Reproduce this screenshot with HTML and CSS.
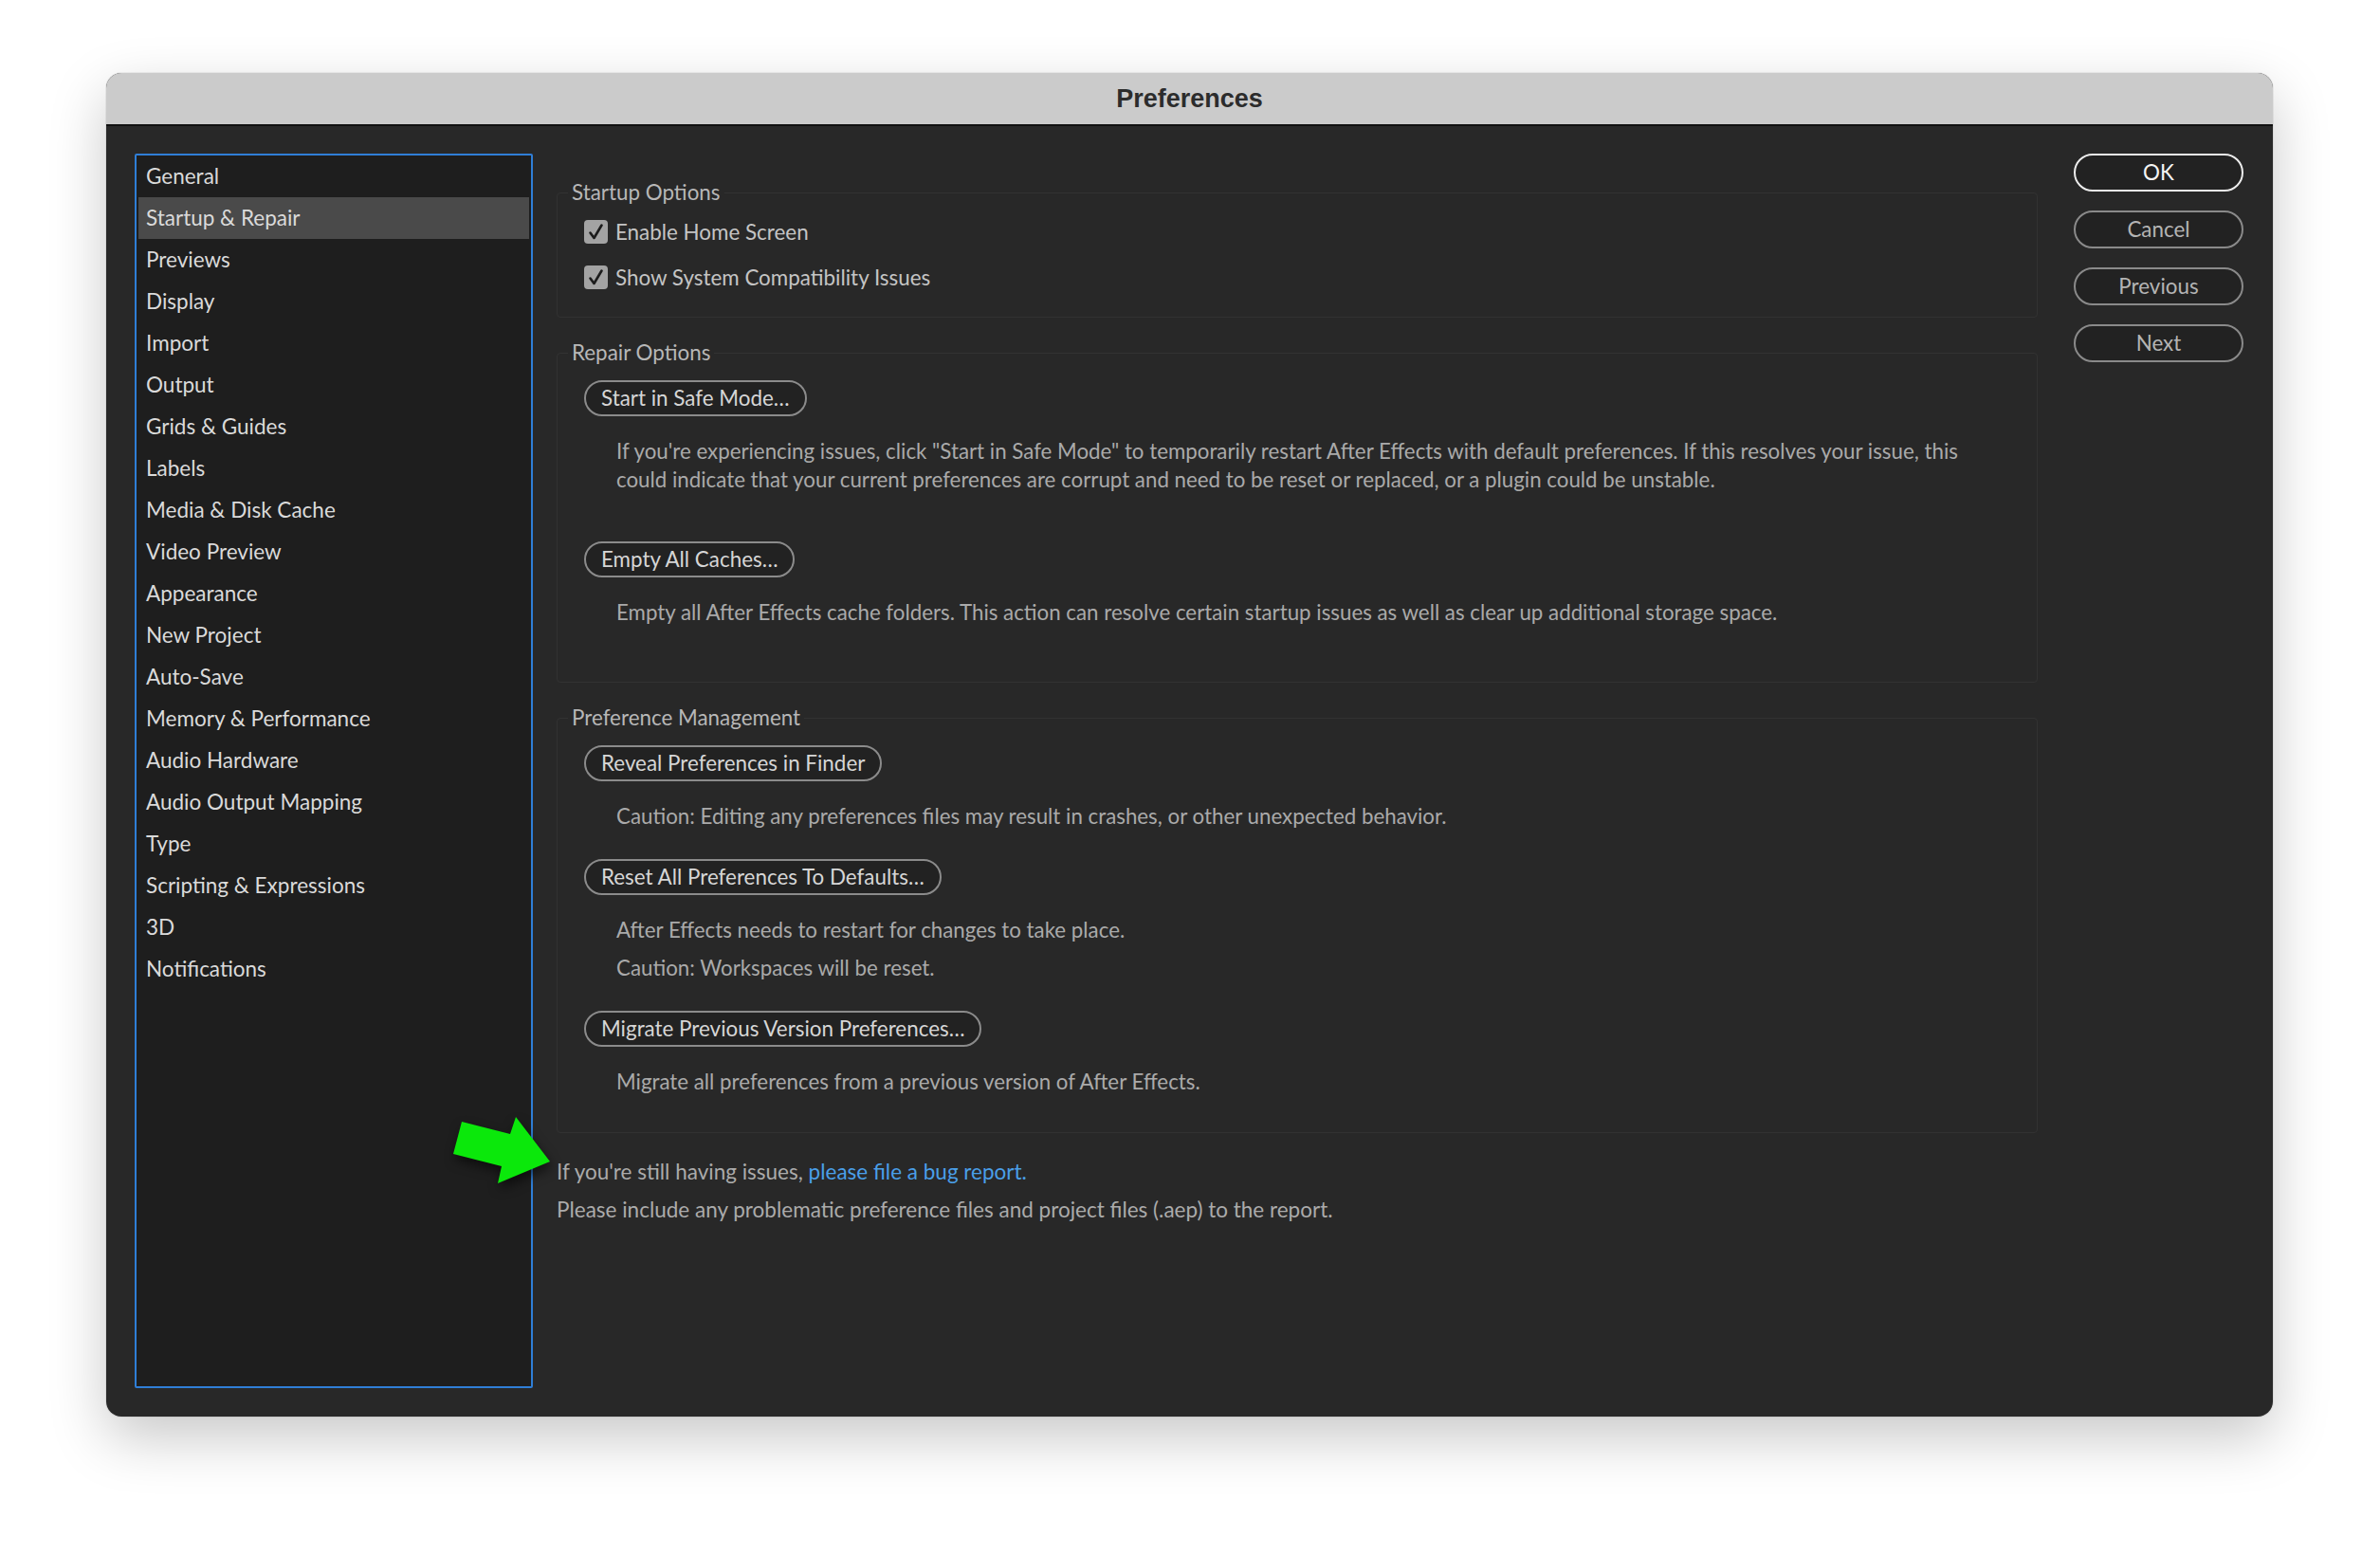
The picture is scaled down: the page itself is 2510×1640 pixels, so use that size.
FILE: index.html
```html
<!DOCTYPE html>
<html lang="en">
<head>
<meta charset="utf-8">
<title>Preferences</title>
<link rel="stylesheet" href="styles.css">
</head>
<body>
<div class="stage">
  <div class="window">
    <div class="titlebar">Preferences</div>
    <div class="window-body">
      <nav class="sidebar">
        <ul class="nav-list">
          <li class="nav-item">General</li>
          <li class="nav-item selected">Startup &amp; Repair</li>
          <li class="nav-item">Previews</li>
          <li class="nav-item">Display</li>
          <li class="nav-item">Import</li>
          <li class="nav-item">Output</li>
          <li class="nav-item">Grids &amp; Guides</li>
          <li class="nav-item">Labels</li>
          <li class="nav-item">Media &amp; Disk Cache</li>
          <li class="nav-item">Video Preview</li>
          <li class="nav-item">Appearance</li>
          <li class="nav-item">New Project</li>
          <li class="nav-item">Auto-Save</li>
          <li class="nav-item">Memory &amp; Performance</li>
          <li class="nav-item">Audio Hardware</li>
          <li class="nav-item">Audio Output Mapping</li>
          <li class="nav-item">Type</li>
          <li class="nav-item">Scripting &amp; Expressions</li>
          <li class="nav-item">3D</li>
          <li class="nav-item">Notifications</li>
        </ul>
      </nav>

      <main class="content">
        <fieldset class="group group-startup">
          <legend class="group-label">Startup Options</legend>
          <label class="check-row">
            <span class="checkbox"><svg viewBox="0 0 25 25" width="25" height="25"><path d="M6.5 13.5 L10.5 19 L18.5 5.5" fill="none" stroke="#1c1c1c" stroke-width="2.6" stroke-linecap="round" stroke-linejoin="round"/></svg></span>
            <span class="check-text">Enable Home Screen</span>
          </label>
          <label class="check-row">
            <span class="checkbox"><svg viewBox="0 0 25 25" width="25" height="25"><path d="M6.5 13.5 L10.5 19 L18.5 5.5" fill="none" stroke="#1c1c1c" stroke-width="2.6" stroke-linecap="round" stroke-linejoin="round"/></svg></span>
            <span class="check-text">Show System Compatibility Issues</span>
          </label>
        </fieldset>

        <fieldset class="group group-repair">
          <legend class="group-label">Repair Options</legend>
          <button class="pill">Start in Safe Mode…</button>
          <p class="desc desc-first">If you're experiencing issues, click "Start in Safe Mode" to temporarily restart After Effects with default preferences. If this resolves your issue, this<br>could indicate that your current preferences are corrupt and need to be reset or replaced, or a plugin could be unstable.</p>
          <button class="pill pill-far">Empty All Caches…</button>
          <p class="desc desc-first">Empty all After Effects cache folders. This action can resolve certain startup issues as well as clear up additional storage space.</p>
        </fieldset>

        <fieldset class="group group-prefs">
          <legend class="group-label">Preference Management</legend>
          <button class="pill">Reveal Preferences in Finder</button>
          <p class="desc desc-first">Caution: Editing any preferences files may result in crashes, or other unexpected behavior.</p>
          <button class="pill pill-near">Reset All Preferences To Defaults…</button>
          <p class="desc desc-first">After Effects needs to restart for changes to take place.</p>
          <p class="desc desc-next">Caution: Workspaces will be reset.</p>
          <button class="pill pill-near">Migrate Previous Version Preferences…</button>
          <p class="desc desc-first">Migrate all preferences from a previous version of After Effects.</p>
        </fieldset>

        <div class="footer-note">
          <p class="note">If you're still having issues, <a class="link" href="#">please file a bug report.</a></p>
          <p class="note note-next">Please include any problematic preference files and project files (.aep) to the report.</p>
        </div>
      </main>

      <aside class="actions">
        <button class="action action-default">OK</button>
        <button class="action">Cancel</button>
        <button class="action">Previous</button>
        <button class="action">Next</button>
      </aside>

      <svg class="annotation-arrow" viewBox="0 0 104 72" width="104" height="72">
        <polygon points="9,5 60,18 66,0 102,47 47,70 51,52 0,39" fill="#0be80b"/>
      </svg>
    </div>
  </div>
</div>
</body>
</html>
```

FILE: styles.css
```css
* {
  box-sizing: border-box;
}

html, body {
  margin: 0;
  padding: 0;
  background: #ffffff;
}

body {
  font-family: "Lato", "Open Sans", "Liberation Sans", sans-serif;
  width: 2510px;
  height: 1640px;
  overflow: hidden;
}

.stage {
  padding: 77px 0 0 112px;
}

.window {
  width: 2285px;
  height: 1417px;
  background: #282828;
  border-radius: 16px;
  box-shadow: 0 22px 60px rgba(0, 0, 0, 0.22), 0 0 0 1px rgba(0, 0, 0, 0.06);
  display: flex;
  flex-direction: column;
  overflow: hidden;
}

.titlebar {
  height: 56px;
  flex: none;
  background: #cbcbcb;
  border-bottom: 2px solid #111111;
  display: flex;
  align-items: center;
  justify-content: center;
  font-family: "Liberation Sans", "Open Sans", sans-serif;
  font-weight: 700;
  font-size: 27px;
  color: #2c2c2c;
  padding-top: 0;
}

.window-body {
  position: relative;
  flex: 1;
  display: flex;
  padding: 29px 31px 30px 30px;
}

/* Sidebar */
.sidebar {
  width: 420px;
  flex: none;
  background: #1e1e1e;
  border: 2px solid #2f7ed6;
  border-radius: 2px;
}

.nav-list {
  list-style: none;
  margin: 0;
  padding: 0 2px;
}

.nav-item {
  height: 44px;
  display: flex;
  align-items: center;
  padding-left: 8px;
  padding-bottom: 1px;
  font-size: 22.5px;
  color: #dadada;
}

.nav-item.selected {
  background: #4a4a4a;
}

/* Content */
.content {
  flex: 1;
  margin-left: 25px;
  padding-top: 28px;
  display: flex;
  flex-direction: column;
}

.group {
  margin: 0;
  border: 1px solid #323232;
  border-radius: 4px;
  padding: 0 20px 0 28px;
  display: flex;
  flex-direction: column;
  align-items: flex-start;
  min-width: 0;
}

.group + .group {
  margin-top: 24px;
}

.group-label {
  margin-left: -17px;
  padding: 0 4px;
  font-size: 22.4px;
  line-height: 26px;
  color: #b7b7b7;
}

.group-startup {
  padding-top: 8px;
  padding-bottom: 22px;
  gap: 8px;
}

.group-repair {
  padding-bottom: 58px;
}

.group-prefs {
  padding-bottom: 38px;
}

.check-row {
  height: 40px;
  display: flex;
  align-items: center;
  gap: 8px;
}

.checkbox {
  width: 25px;
  height: 25px;
  border-radius: 4px;
  background: #a3a3a3;
  display: flex;
}

.check-text {
  font-size: 22.4px;
  color: #c4c4c4;
}

.pill {
  margin-top: 16px;
  height: 38px;
  padding: 0 16px;
  border: 2px solid #8b8b8b;
  border-radius: 19px;
  background: #222222;
  color: #d6d6d6;
  font-family: inherit;
  font-size: 22.4px;
  line-height: 1;
}

.pill-far {
  margin-top: 50px;
}

.pill-near {
  margin-top: 30px;
}

.desc {
  margin: 0;
  padding-left: 34px;
  font-size: 22.3px;
  line-height: 30px;
  color: #aaaaaa;
}

.desc-first {
  margin-top: 22px;
}

.desc-next {
  margin-top: 10px;
}

.footer-note {
  margin-top: 26px;
}

.note {
  margin: 0;
  font-size: 22.5px;
  line-height: 30px;
  color: #ababab;
}

.note-next {
  margin-top: 10px;
}

.link {
  color: #4a9fe8;
  text-decoration: none;
}

/* Right-hand action buttons */
.actions {
  width: 179px;
  flex: none;
  margin-left: 38px;
  display: flex;
  flex-direction: column;
  gap: 20px;
}

.action {
  height: 40px;
  border: 2px solid #8a8a8a;
  border-radius: 20px;
  background: #222222;
  color: #b4b4b4;
  font-family: inherit;
  font-size: 22.4px;
  line-height: 1;
}

.action-default {
  border-color: #ececec;
  color: #f4f4f4;
}

/* Annotation overlay */
.annotation-arrow {
  position: absolute;
  left: 366px;
  top: 1045px;
  filter: drop-shadow(2px 6px 6px rgba(0, 0, 0, 0.55));
}
```
